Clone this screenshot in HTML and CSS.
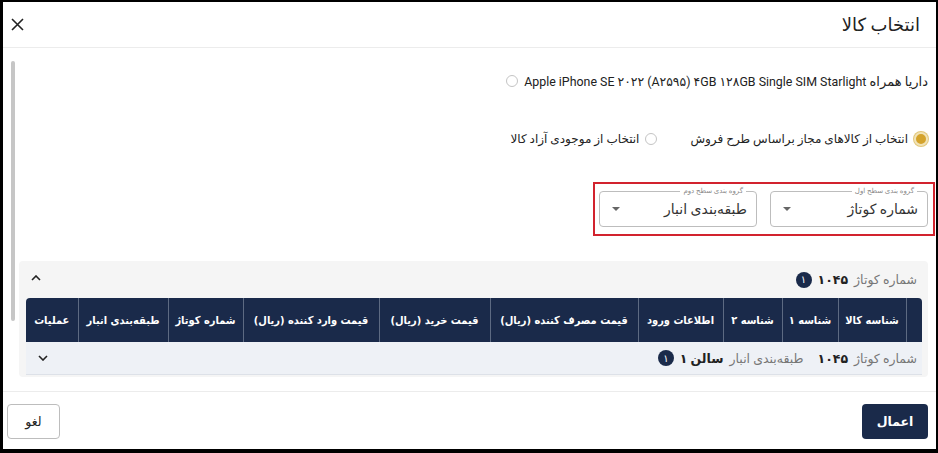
FILE: index.html
```html
<!DOCTYPE html>
<html lang="fa" dir="rtl">
<head>
    <meta charset="UTF-8">
    <meta name="viewport" content="width=device-width, initial-scale=1.0">
    <title>انتخاب کالا</title>
    <link rel="stylesheet" href="styles.css">
</head>
<body>
    <div class="dialog">
        <div class="dialog-header">
            <h2>انتخاب کالا</h2>
            <button class="close-button" aria-label="بستن">
                <svg width="13" height="13" viewBox="0 0 13 13"><path d="M1 1 L12 12 M12 1 L1 12" stroke="#222" stroke-width="1.6" fill="none"/></svg>
            </button>
        </div>

        <div class="dialog-body">
            <div class="scroll-thumb"></div>

            <label class="radio-line">
                <span class="product-name">داریا همراه <span class="latin" dir="ltr">Apple iPhone SE ۲۰۲۲ (A۲۵۹۵) ۴GB ۱۲۸GB Single SIM Starlight</span></span>
                <span class="radio"></span>
            </label>

            <div class="radio-group">
                <label class="radio-option">
                    <span class="radio checked"></span>
                    <span>انتخاب از کالاهای مجاز براساس طرح فروش</span>
                </label>
                <label class="radio-option">
                    <span class="radio"></span>
                    <span>انتخاب از موجودی آزاد کالا</span>
                </label>
            </div>

            <div class="group-box">
                <div class="select-field">
                    <span class="field-label">گروه بندی سطح اول</span>
                    <span class="field-value">شماره کوتاژ</span>
                    <span class="caret"></span>
                </div>
                <div class="select-field">
                    <span class="field-label">گروه بندی سطح دوم</span>
                    <span class="field-value">طبقه‌بندی انبار</span>
                    <span class="caret"></span>
                </div>
            </div>

            <div class="accordion">
                <div class="accordion-head">
                    <span class="muted">شماره کوتاژ</span>
                    <strong>۱۰۴۵</strong>
                    <span class="badge">۱</span>
                    <svg class="chevron" width="10" height="6" viewBox="0 0 10 6"><path d="M1 5 L5 1 L9 5" stroke="#222" stroke-width="1.6" fill="none"/></svg>
                </div>
                <table class="goods-table">
                    <colgroup>
                        <col style="width: 16px">
                        <col style="width: 68px">
                        <col style="width: 56px">
                        <col style="width: 59px">
                        <col style="width: 85px">
                        <col style="width: 148px">
                        <col style="width: 111px">
                        <col style="width: 136px">
                        <col style="width: 75px">
                        <col style="width: 90px">
                        <col style="width: 52px">
                    </colgroup>
                    <thead>
                        <tr>
                            <th></th>
                            <th>شناسه کالا</th>
                            <th>شناسه ۱</th>
                            <th>شناسه ۲</th>
                            <th>اطلاعات ورود</th>
                            <th>قیمت مصرف کننده (ریال)</th>
                            <th>قیمت خرید (ریال)</th>
                            <th>قیمت وارد کننده (ریال)</th>
                            <th>شماره کوتاژ</th>
                            <th>طبقه‌بندی انبار</th>
                            <th>عملیات</th>
                        </tr>
                    </thead>
                    <tbody>
                        <tr class="group-row">
                            <td colspan="11">
                                <div class="group-line">
                                    <span class="muted">شماره کوتاژ</span>
                                    <strong>۱۰۴۵</strong>
                                    <span class="muted spaced">طبقه‌بندی انبار</span>
                                    <strong>سالن ۱</strong>
                                    <span class="badge">۱</span>
                                    <svg class="chevron" width="10" height="6" viewBox="0 0 10 6"><path d="M1 1 L5 5 L9 1" stroke="#222" stroke-width="1.6" fill="none"/></svg>
                                </div>
                            </td>
                        </tr>
                    </tbody>
                </table>
            </div>
        </div>

        <div class="dialog-footer">
            <button class="apply-button">اعمال</button>
            <button class="cancel-button">لغو</button>
        </div>
    </div>
</body>
</html>
```

FILE: styles.css
```css
body {
    margin: 0;
    background-color: #000;
    font-family: Roboto, "DejaVu Sans", sans-serif;
    color: #222;
}

.dialog {
    margin: 2px 2px 4px 3px;
    height: 447px;
    background: #fff;
    display: flex;
    flex-direction: column;
    direction: rtl;
}

.dialog-header {
    height: 46px;
    padding: 0 16px 0 7px;
    display: flex;
    justify-content: space-between;
    align-items: center;
    border-bottom: 1px solid #ececec;
}

.dialog-header h2 {
    margin: 0;
    font-size: 18px;
    font-weight: normal;
}

.close-button {
    background: none;
    border: none;
    padding: 0;
    width: 14px;
    height: 14px;
    display: flex;
    align-items: center;
    justify-content: center;
    cursor: pointer;
}

.dialog-body {
    position: relative;
    flex: 1;
    padding: 23px 8px 14px 16px;
    display: flex;
    flex-direction: column;
}

.scroll-thumb {
    position: absolute;
    left: 8px;
    top: 13px;
    width: 4px;
    height: 260px;
    border-radius: 2px;
    background: #c6c6c6;
}

.radio-line {
    height: 20px;
    display: flex;
    align-items: center;
    gap: 6px;
    font-size: 13px;
}

.latin {
    font-size: 12.4px;
}

.radio {
    width: 12px;
    height: 12px;
    border: 1px solid #c4c4c4;
    border-radius: 50%;
    box-sizing: border-box;
    flex-shrink: 0;
    position: relative;
}

.radio.checked {
    width: 14px;
    height: 14px;
    border: 2px solid #f1e3b8;
    background: #d4a32c;
    box-shadow: 0 0 0 1px #e2c77a;
}

.radio-group {
    margin-top: 38px;
    height: 20px;
    display: flex;
    align-items: center;
    gap: 33px;
    font-size: 12px;
}

.radio-option {
    display: flex;
    align-items: center;
    gap: 6px;
}

.group-box {
    align-self: flex-start;
    margin: 33px -7px 0 0;
    padding: 7px 5px 7px 4px;
    border: 2px solid #d2232e;
    display: flex;
    gap: 13px;
}

.select-field {
    position: relative;
    width: 158px;
    height: 36px;
    box-sizing: border-box;
    border: 1px solid #bdbdbd;
    border-radius: 4px;
    padding: 0 9px 0 12px;
    display: flex;
    align-items: center;
    justify-content: space-between;
}

.field-label {
    position: absolute;
    top: -6px;
    right: 10px;
    padding: 0 3px;
    background: #fff;
    font-size: 7px;
    color: #888;
    line-height: 10px;
}

.field-value {
    font-size: 14px;
    color: #333;
}

.caret {
    width: 0;
    height: 0;
    border-left: 4px solid transparent;
    border-right: 4px solid transparent;
    border-top: 4px solid #666;
}

.accordion {
    margin-top: 25px;
    background: #f5f5f5;
    border-radius: 4px;
    padding: 0 6px 2px 7px;
}

.accordion-head {
    height: 37px;
    padding: 0 5px 0 5px;
    display: flex;
    align-items: center;
    gap: 6px;
    font-size: 12.5px;
}

.accordion-head .chevron {
    margin-right: auto;
    margin-top: -4px;
}

.muted {
    color: #777;
}

strong {
    font-weight: bold;
    color: #222;
}

.badge {
    width: 16px;
    height: 16px;
    border-radius: 50%;
    background: #1a2a4a;
    color: #fff;
    font-size: 10px;
    display: inline-flex;
    align-items: center;
    justify-content: center;
}

.goods-table {
    width: 896px;
    table-layout: fixed;
    border-collapse: collapse;
}

.goods-table th {
    height: 44px;
    padding: 0 2px;
    background: #1a2a4a;
    color: #fff;
    font-family: "DejaVu Sans Condensed", "DejaVu Sans", sans-serif;
    font-size: 11px;
    font-weight: bold;
    border-left: 1px solid #5d6a82;
    white-space: nowrap;
    overflow: hidden;
}

.goods-table th:first-child {
    border-top-right-radius: 4px;
}

.goods-table th:last-child {
    border-left: none;
    border-top-left-radius: 4px;
}

.group-row td {
    height: 32px;
    padding: 0 5px 0 12px;
    background: #eef1f6;
    border-bottom: 1px solid #dde1e8;
}

.group-line {
    display: flex;
    align-items: center;
    gap: 6px;
    font-size: 12.5px;
}

.group-line .spaced {
    margin-right: 8px;
}

.group-line .chevron {
    margin-right: auto;
}

.dialog-footer {
    border-top: 1px solid #ececec;
    padding: 12px 8px 10px 4px;
    display: flex;
    justify-content: space-between;
    align-items: flex-start;
}

.apply-button {
    width: 66px;
    height: 35px;
    border: none;
    border-radius: 4px;
    background: #1a2a4a;
    color: #fff;
    font-family: inherit;
    font-size: 12.5px;
    font-weight: bold;
    cursor: pointer;
}

.cancel-button {
    width: 53px;
    height: 35px;
    border: 1px solid #bdbdbd;
    border-radius: 4px;
    background: #fff;
    color: #222;
    font-family: inherit;
    font-size: 12.5px;
    cursor: pointer;
}
```
